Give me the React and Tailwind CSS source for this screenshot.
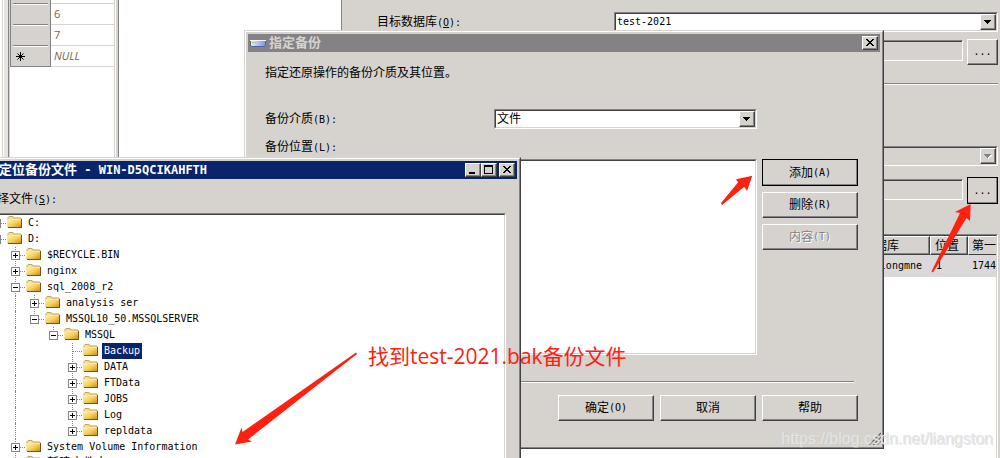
import { useState } from 'react'

const raised = 'border border-t-white border-l-white border-r-[#424142] border-b-[#424142] shadow-[inset_-1px_-1px_0_#848284] bg-[#d6d3ce]'
const sunken = 'border border-t-[#848284] border-l-[#848284] border-r-white border-b-white'
const sunkenInner = 'border border-t-[#424142] border-l-[#424142] border-r-[#d6d3ce] border-b-[#d6d3ce]'

const folders = [
  { level: 0, name: 'C:', sign: '+' },
  { level: 0, name: 'D:', sign: '-' },
  { level: 1, name: '$RECYCLE.BIN', sign: '+' },
  { level: 1, name: 'nginx', sign: '+' },
  { level: 1, name: 'sql_2008_r2', sign: '-' },
  { level: 2, name: 'analysis ser', sign: '+' },
  { level: 2, name: 'MSSQL10_50.MSSQLSERVER', sign: '-', last: true },
  { level: 3, name: 'MSSQL', sign: '-', last: true },
  { level: 4, name: 'Backup' },
  { level: 4, name: 'DATA', sign: '+' },
  { level: 4, name: 'FTData', sign: '+' },
  { level: 4, name: 'JOBS', sign: '+' },
  { level: 4, name: 'Log', sign: '+' },
  { level: 4, name: 'repldata', sign: '+', last: true },
  { level: 1, name: 'System Volume Information', sign: '+' },
  { level: 1, name: '新建文件夹', cjk: true },
]

// caption with an access key, e.g. 添加(A)
function Caption({ text, hotkey, underline, colon }) {
  return (
    <>
      {text}
      {hotkey && (
        <span className="text-[10px]">
          ({underline ? <u>{hotkey}</u> : hotkey}){colon && ':'}
        </span>
      )}
    </>
  )
}

function PushButton({ children, className = 'h-[26px]', isDefault, disabled }) {
  return (
    <button
      type="button"
      disabled={disabled}
      className={`flex items-center justify-center ${raised} ${className} ${isDefault ? 'outline outline-black -outline-offset-1' : ''} ${disabled ? 'text-[#848284] [text-shadow:1px_1px_0_#fff]' : ''}`}
    >
      {children}
    </button>
  )
}

function Combo({ id, value, className, disabled, small }) {
  return (
    <div className={`${sunken} ${className}`}>
      <div className={`flex h-full ${sunkenInner} ${disabled ? 'bg-[#d6d3ce]' : 'bg-white'}`}>
        <select
          id={id}
          disabled={disabled}
          aria-label={value || '备份集源'}
          className={`min-w-0 flex-1 appearance-none bg-transparent pl-px leading-4 outline-none ${small ? 'text-[10px]' : ''}`}
        >
          <option>{value}</option>
        </select>
        <span className={`flex w-4 shrink-0 items-center justify-center ${raised}`}>
          <svg width="8" height="5" viewBox="0 0 8 5" shapeRendering="crispEdges">
            {disabled && <path d="M1 1h7v1h-1v1h-1v1h-1v1h-1v-1h-1v-1h-1v-1h-1z" fill="#fff" />}
            <path d="M0 0h7v1h-1v1h-1v1h-1v1h-1v-1h-1v-1h-1v-1h-1z" fill={disabled ? '#848284' : '#000'} />
          </svg>
        </span>
      </div>
    </div>
  )
}

function CaptionButton({ kind, label }) {
  return (
    <button type="button" aria-label={label} className={`flex h-[14px] w-4 items-center justify-center ${raised}`}>
      <svg width="10" height="10" viewBox="0 0 10 10" shapeRendering="crispEdges">
        {kind === 'min' && <path d="M1 7h6v2h-6z" />}
        {kind === 'max' && <path d="M0 0h9v9h-9zM1 2v6h7v-6z" fillRule="evenodd" />}
        {kind === 'close' && (
          <path d="M1 1h2v1h1v1h2v-1h1v-1h2v1h-1v1h-1v1h-1v1h1v1h1v1h1v1h-2v-1h-1v-1h-2v1h-1v1h-2v-1h1v-1h1v-1h1v-1h-1v-1h-1v-1h-1z" />
        )}
      </svg>
    </button>
  )
}

function Separator({ className }) {
  return <hr className={`h-[2px] shrink-0 border-0 border-t border-[#848284] bg-white ${className}`} />
}

function FolderIcon() {
  return (
    <svg className="shrink-0" width="16" height="16" viewBox="0 0 16 16">
      <defs>
        <linearGradient id="folder" x1="0" y1="0" x2="1" y2="1">
          <stop offset="0" stopColor="#fff0a8" />
          <stop offset="0.5" stopColor="#f5cf62" />
          <stop offset="1" stopColor="#cf8a10" />
        </linearGradient>
      </defs>
      <path d="M1 12V2.5L2 1.500H6L7 3H14V12Z" fill="#f7e08c" stroke="#b8a468" />
      <path d="M0.5 4.5H14V12.500H1.500Z" fill="url(#folder)" />
      <path d="M0.5 11V4.5H14" fill="none" stroke="#fbe9a0" />
      <path d="M1 12.500H15M14.500 4V13" fill="none" stroke="#7a5412" />
    </svg>
  )
}

function TreeNode({ node, selected, onSelect }) {
  const ancestors = Array.from({ length: node.level }, (_, i) => i)
  return (
    <li className="flex h-4">
      {ancestors.map((i) => (
        <span key={i} className="w-[19px] shrink-0 pl-1">
          {i === 1 && <span className="block h-4 border-l border-dotted border-[#848284]" />}
        </span>
      ))}
      <svg className="shrink-0" width="15" height="16" viewBox="0 0 15 16" shapeRendering="crispEdges">
        <path d={node.last ? 'M4.5 0V8' : 'M4.5 0V16'} stroke="#848284" strokeDasharray="1 1" />
        <path d="M5 8.5H15" stroke="#848284" strokeDasharray="1 1" />
        {node.sign && <rect x="0.5" y="4.5" width="8" height="8" fill="#fff" stroke="#848284" />}
        {node.sign && <path d="M2 8.5H7" stroke="#000" />}
        {node.sign === '+' && <path d="M4.5 6V11" stroke="#000" />}
      </svg>
      <FolderIcon />
      <button
        type="button"
        onClick={onSelect}
        className={`ml-[3px] whitespace-pre px-[2px] leading-4 ${node.cjk ? 'text-xs' : 'text-[10px]'} ${selected ? 'bg-[#08246b] text-white' : ''}`}
      >
        {node.name}
      </button>
    </li>
  )
}

function ResultGrid() {
  const rows = ['6', '7', 'NULL']
  return (
    <div className="absolute inset-y-0 left-0 flex w-[119px] border-r border-[#848284] bg-white">
      <div className="ml-[2px] w-px bg-[#d6d3ce]" />
      <div className="ml-px w-1 bg-[#e7e3e0]" />
      <div className="w-px bg-[#848284]" />
      <div className="w-px bg-[#d6d3ce]" />
      <div className="flex-1">
        <table className="w-full border-separate border-spacing-0 text-[#736347]">
          <tbody>
            <tr className="h-1">
              <th className="w-[41px] border-r border-l border-[#848284] bg-[#d6d3ce] px-[2px]">
                <div className="h-1 border-b border-[#848284]" />
              </th>
              <td className="border-b border-[#d6d3ce]" />
            </tr>
            {rows.map((r) => (
              <tr key={r} className="h-[21px]">
                <th
                  className={`border-r border-l border-[#848284] bg-[#d6d3ce] p-0 ${r === 'NULL' ? 'border-b' : ''}`}
                >
                  <div className={`mx-[2px] flex items-center border-t border-white pl-[3px] ${r === 'NULL' ? 'h-5' : 'h-[21px] border-b border-b-[#848284]'}`}>
                    {r === 'NULL' && (
                      <svg width="9" height="9" viewBox="0 0 9 9" stroke="#000">
                        <path d="M4.5 0V9M0 4.5H9M1.5 1.5L7.5 7.5M7.5 1.5L1.5 7.5" />
                      </svg>
                    )}
                  </div>
                </th>
                <td className={`border-b border-[#d6d3ce] p-0 pl-[3px] font-['Open_Sans',sans-serif] text-[11px] leading-5 ${r === 'NULL' ? 'italic' : ''}`}>
                  {r}
                </td>
              </tr>
            ))}
          </tbody>
        </table>
      </div>
      <div className="w-px bg-[#d6d3ce]" />
      <div className="ml-px w-[2px] bg-[#d6d3ce]" />
    </div>
  )
}

function RestoreWindow() {
  const th = `overflow-hidden whitespace-nowrap px-1 text-left font-normal ${raised}`
  return (
    <section className="absolute inset-y-0 right-0 left-[341px] flex flex-col border-l border-[#848284] bg-[#d6d3ce] pt-3 pr-[2px]">
      <div className="flex h-5 items-center pl-[35px]">
        <label htmlFor="target" className="w-[237px] shrink-0">
          <Caption text="目标数据库" hotkey="O" underline colon />
        </label>
        <Combo id="target" value="test-2021" className="h-5 flex-1" small />
      </div>
      <div className="mt-[7px] flex gap-1 pl-[272px]">
        <input readOnly aria-label="目标时间点" className={`mt-px h-[21px] min-w-0 flex-1 ${sunken} shadow-[inset_1px_1px_0_#424142]`} />
        <PushButton className="h-[26px] w-[31px] text-[10px]">...</PushButton>
      </div>
      <Separator className="mt-[18px] ml-[35px]" />
      <div className="mt-[61px] flex pl-[272px]">
        <Combo id="source" value="" className="h-5 flex-1" disabled />
      </div>
      <div className="mt-[11px] flex gap-1 pl-[272px]">
        <input readOnly aria-label="源设备" className={`mt-[2px] h-[21px] min-w-0 flex-1 ${sunken} shadow-[inset_1px_1px_0_#424142]`} />
        <PushButton className="h-[27px] w-[31px] text-[10px]" isDefault>...</PushButton>
      </div>
      <div className="mt-[30px] ml-3 min-h-0 flex-1 border-t border-r border-l border-t-[#848284] border-r-white border-l-[#848284] bg-white">
        <div className="h-full overflow-hidden border-t border-r border-t-[#424142] border-r-[#d6d3ce]">
          <table className="w-full table-fixed border-separate border-spacing-0">
            <thead>
              <tr className="h-[19px]">
                <th className={th} />
                <th className={`${th} w-[72px]`}>数据库</th>
                <th className={`${th} w-[38px]`}>位置</th>
                <th className="w-7 border-t border-b border-l border-t-white border-b-[#424142] border-l-white bg-[#d6d3ce] p-0 pl-[3px] text-left font-normal whitespace-nowrap">
                  第一
                </th>
              </tr>
            </thead>
            <tbody>
              <tr className="h-[22px] bg-[#dbd8da] text-[10px]">
                <td />
                <td className="p-0 pr-2 text-right whitespace-nowrap">longmne</td>
                <td className="p-0 pl-[6px]">1</td>
                <td className="p-0 pl-1">1744</td>
              </tr>
            </tbody>
          </table>
        </div>
      </div>
    </section>
  )
}

function SpecifyBackupDialog() {
  return (
    <section className="absolute top-[30px] left-[244px] w-[640px] border border-t-[#d6d3ce] border-l-[#d6d3ce] border-r-[#424142] border-b-[#424142] bg-[#d6d3ce]">
      <div className="border border-t-white border-l-white border-r-[#848284] border-b-[#848284] p-[2px]">
        <header className="flex h-[18px] items-center gap-[3px] bg-[#848284] px-[2px]">
          <svg width="16" height="9" viewBox="0 0 16 9">
            <defs>
              <linearGradient id="drive" x1="0" y1="0" x2="1" y2="0">
                <stop offset="0" stopColor="#e8f0ff" />
                <stop offset="1" stopColor="#7b97d8" />
              </linearGradient>
            </defs>
            <path d="M0.5 1.5H15.5V6L14.5 7.500H1.5L0.5 6Z" fill="url(#drive)" />
            <path d="M0 1.500H16" stroke="#f4f8ff" />
            <path d="M0.5 2V6L1.500 7.500H14.500L15.500 6V2" fill="none" stroke="#4a64a8" />
            <path d="M2 3.5H4M5 3.5H6" stroke="#c8c020" />
          </svg>
          <h2 className="flex-1 text-[13px] font-bold text-[#d6d3ce]">指定备份</h2>
          <CaptionButton kind="close" label="关闭" />
        </header>
        <div className="pr-[22px] pl-[17px]">
          <p className="mt-[13px] leading-4">指定还原操作的备份介质及其位置。</p>
          <div className="mt-7 mr-[101px] flex h-5 items-center">
            <label htmlFor="media" className="w-[229px] leading-4">
              <Caption text="备份介质" hotkey="B" colon />
            </label>
            <Combo id="media" value="文件" className="h-5 flex-1" />
          </div>
          <p className="mt-[10px] leading-4">
            <Caption text="备份位置" hotkey="L" colon />
          </p>
          <div className="mt-[3px] flex gap-[5px]">
            <div className={`h-[196px] flex-1 ${sunken}`}>
              <div className={`h-full bg-white ${sunkenInner}`} />
            </div>
            <div className="flex w-24 flex-col gap-[6px]">
              <PushButton className="h-[27px]" isDefault><Caption text="添加" hotkey="A" /></PushButton>
              <PushButton><Caption text="删除" hotkey="R" /></PushButton>
              <PushButton disabled><Caption text="内容" hotkey="T" /></PushButton>
            </div>
          </div>
          <Separator className="mt-[26px] mr-1" />
          <div className="mt-3 mb-6 flex justify-end gap-[6px]">
            <PushButton className="h-[26px] w-24"><Caption text="确定" hotkey="O" /></PushButton>
            <PushButton className="h-[26px] w-24">取消</PushButton>
            <PushButton className="h-[26px] w-24">帮助</PushButton>
          </div>
        </div>
      </div>
      <svg className="absolute right-[2px] bottom-[3px]" width="13" height="13" viewBox="0 0 13 13">
        <path d="M0 13L12 1M4 13L12 5M8 13L12 9" stroke="#fff" />
        <path d="M1 13L13 1M5 13L13 5M9 13L13 9" stroke="#666366" strokeWidth="1.5" />
      </svg>
    </section>
  )
}

function LocateFileDialog() {
  const [selected, setSelected] = useState('Backup')
  return (
    <section className="absolute top-[157px] bottom-0 left-[-16px] flex w-[537px] border-t border-r border-l border-t-[#d6d3ce] border-l-[#d6d3ce] border-r-[#424142] bg-[#d6d3ce]">
      <div className="flex min-w-0 flex-1 flex-col border-t border-r border-l border-t-white border-l-white border-r-[#848284] pt-[2px]">
        <header className="mr-[2px] flex h-[18px] shrink-0 items-center bg-[#08246b] pr-[2px] pl-[13px] text-white">
          <h2 className="flex-1 whitespace-pre text-[13px] leading-4 font-bold">
            定位备份文件<span className="text-xs"> - WIN-D5QCIKAHFTH</span>
          </h2>
          <CaptionButton kind="min" label="最小化" />
          <CaptionButton kind="max" label="最大化" />
          <span className="w-[2px]" />
          <CaptionButton kind="close" label="关闭" />
        </header>
        <p className="mt-3 mb-[5px] pl-[11px] leading-4">
          <Caption text="择文件" hotkey="S" underline colon />
        </p>
        <div className="mr-[13px] min-h-0 flex-1 border-t border-r border-l border-t-[#848284] border-r-white border-l-[#848284]">
          <div className="h-full overflow-hidden border-t border-r border-l border-t-[#424142] border-r-[#d6d3ce] border-l-[#424142] bg-white">
            <ul className="pl-1">
              {folders.map((f) => (
                <TreeNode key={f.name} node={f} selected={selected === f.name} onSelect={() => setSelected(f.name)} />
              ))}
            </ul>
          </div>
        </div>
      </div>
    </section>
  )
}

export default function App() {
  return (
    <main className="relative h-screen overflow-hidden bg-white font-['DejaVu_Sans_Mono','Noto_Sans_CJK_SC',monospace] text-xs text-black">
      <ResultGrid />
      <RestoreWindow />
      <SpecifyBackupDialog />
      <LocateFileDialog />

      {/* notes drawn over the windows */}
      <p className="absolute top-[342px] left-[368px] whitespace-nowrap font-['Open_Sans','Noto_Sans_CJK_SC',sans-serif] text-[21px] leading-7 text-[#ff2010]">
        找到test-2021.bak备份文件
      </p>
      <svg className="pointer-events-none absolute top-0 left-0" width="1000" height="458" viewBox="0 0 1000 458" fill="#ff2010">
        <path d="M356 352.5L242.5 432L241.5 427.5L235 444.5L252 441.5L248 439.5L357 354Z" />
        <path d="M721 203L738 182.500L736 179.300L752.300 175.700L747 191L744.300 186.700L722 205Z" />
        <path d="M931.500 271.500L960 213L955 212L970.700 204L970 221L966.500 218L933 272.500Z" />
      </svg>
      <p className="absolute right-[7px] bottom-[9px] font-['Liberation_Sans',sans-serif] text-[16px] leading-5 text-[#e4e4e4] [text-shadow:1px_1px_0_#c8c8c880]">
        https://blog.csdn.net/liangston
      </p>
    </main>
  )
}
